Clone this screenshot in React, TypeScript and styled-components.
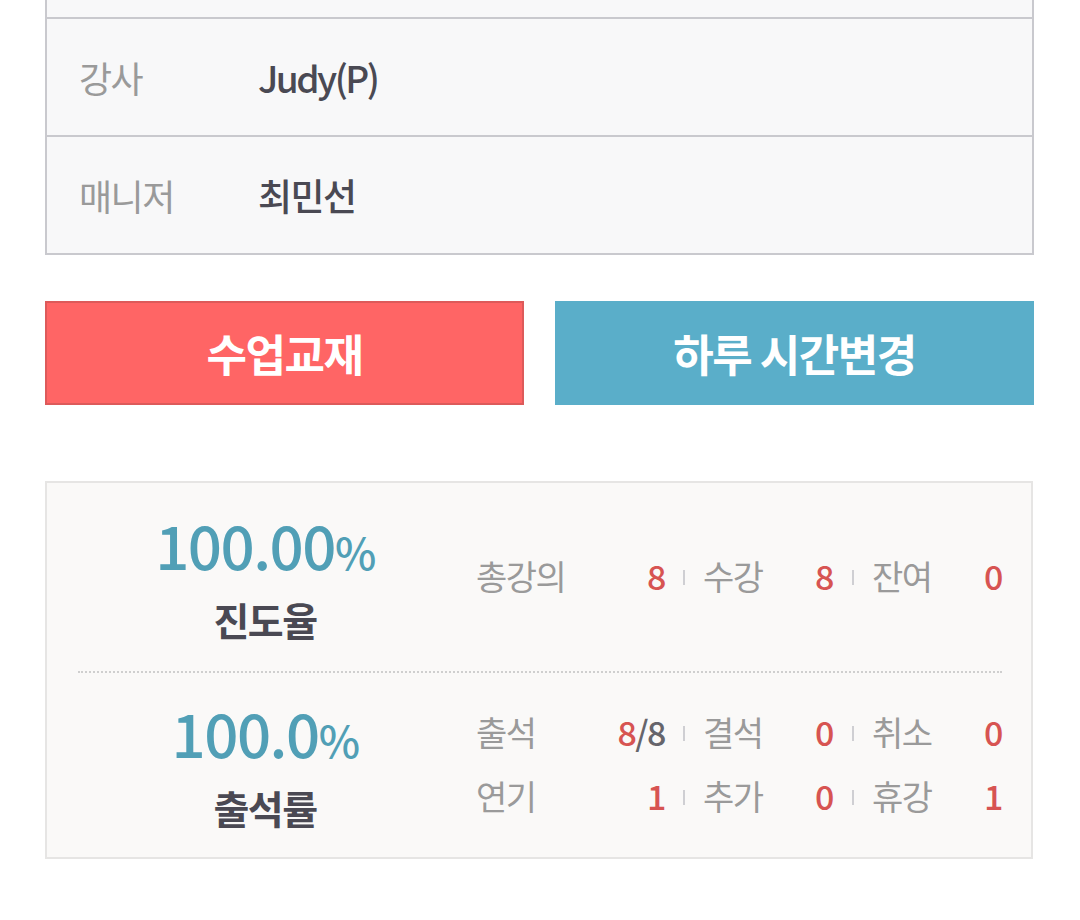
import React from "react";
import styled, { createGlobalStyle } from "styled-components";

const Global = createGlobalStyle`
  html, body { margin: 0; padding: 0; background: #ffffff; }
  body { font-family: "Noto Sans CJK KR", "Noto Sans", sans-serif; }
  * { box-sizing: border-box; }
`;

const Page = styled.div`
  width: 1080px;
  padding: 0 46px 40px 45px;
`;

const InfoTable = styled.div`
  border: 2px solid #c9c9ce;
  border-top: none;
  background: #f8f8f9;
`;

const InfoRow = styled.div<{ $cut?: boolean }>`
  display: flex;
  align-items: center;
  height: ${(p) => (p.$cut ? "17px" : "118px")};
  padding-left: 32px;
  & + & { border-top: 2px solid #c9c9ce; }
`;

const InfoLabel = styled.div`
  width: 179px;
  font-size: 36px;
  color: #9a9a9a;
  letter-spacing: -1.5px;
`;

const InfoValue = styled.div<{ $latin?: boolean }>`
  font-size: 37px;
  font-weight: 500;
  color: #4a4953;
  letter-spacing: ${(p) => (p.$latin ? "-2.5px" : "-1.5px")};
`;

const ButtonRow = styled.div`
  display: grid;
  grid-template-columns: 1fr 1fr;
  gap: 31px;
  margin-top: 46px;
`;

const ActionButton = styled.button<{ $variant: "red" | "blue" }>`
  height: 104px;
  border: 2px solid ${(p) => (p.$variant === "red" ? "#dd5a5a" : "#5aaec9")};
  background: ${(p) => (p.$variant === "red" ? "#ff6565" : "#5aaec9")};
  color: #ffffff;
  font-family: "Noto Sans CJK KR", sans-serif;
  font-size: 44px;
  font-weight: 700;
  letter-spacing: -1.5px;
  padding: 0;
`;

const StatsBox = styled.div`
  margin-top: 76px;
  width: 988px;
  border: 2px solid #e6e5e4;
  background: #faf9f8;
  padding: 0 29px 0 31px;
`;

const Section = styled.div<{ $h: number }>`
  display: grid;
  grid-template-columns: 374px 1fr;
  column-gap: 24px;
  align-items: center;
  height: ${(p) => p.$h}px;
  & + & { border-top: 2px dotted #cfcfcf; }
`;

const RateBlock = styled.div`
  display: flex;
  flex-direction: column;
  align-items: center;
`;

const RateNumber = styled.div`
  font-size: 60px;
  line-height: 62px;
  font-weight: 500;
  color: #519fb6;
  letter-spacing: -1.5px;
`;

const Pct = styled.span`
  font-size: 44px;
`;

const RateLabel = styled.div`
  margin-top: 14px;
  font-size: 39px;
  line-height: 46px;
  font-weight: 700;
  color: #4a4953;
  letter-spacing: -1.5px;
`;

const StatRows = styled.div`
  display: flex;
  flex-direction: column;
  gap: 14px;
`;

const StatRow = styled.div`
  display: grid;
  grid-template-columns: 189px 38px 130px 39px 130px;
  align-items: center;
  height: 50px;
`;

const StatCell = styled.div`
  display: flex;
  justify-content: space-between;
  align-items: center;
  font-size: 34px;
  letter-spacing: -1.5px;
  margin-top: -4px;
`;

const StatLabel = styled.span`
  color: #9a9a9a;
`;

const StatValue = styled.span`
  color: #d75452;
  font-weight: 500;
`;

const Slash = styled.span`
  color: #66656b;
`;

const Sep = styled.span`
  justify-self: center;
  width: 2px;
  height: 15px;
  background: #cfcfd3;
`;

type Stat = { label: string; value: React.ReactNode };

const Stats = ({ items }: { items: Stat[] }) => (
  <StatRow>
    {items.map((s, i) => (
      <React.Fragment key={s.label}>
        {i > 0 && <Sep />}
        <StatCell>
          <StatLabel>{s.label}</StatLabel>
          <StatValue>{s.value}</StatValue>
        </StatCell>
      </React.Fragment>
    ))}
  </StatRow>
);

export default function App() {
  return (
    <>
      <Global />
      <Page>
        <InfoTable>
          <InfoRow $cut />
          <InfoRow>
            <InfoLabel>강사</InfoLabel>
            <InfoValue $latin>Judy(P)</InfoValue>
          </InfoRow>
          <InfoRow>
            <InfoLabel>매니저</InfoLabel>
            <InfoValue>최민선</InfoValue>
          </InfoRow>
        </InfoTable>

        <ButtonRow>
          <ActionButton $variant="red">수업교재</ActionButton>
          <ActionButton $variant="blue">하루 시간변경</ActionButton>
        </ButtonRow>

        <StatsBox>
          <Section $h={188}>
            <RateBlock>
              <RateNumber>
                100.00<Pct>%</Pct>
              </RateNumber>
              <RateLabel>진도율</RateLabel>
            </RateBlock>
            <StatRows>
              <Stats
                items={[
                  { label: "총강의", value: "8" },
                  { label: "수강", value: "8" },
                  { label: "잔여", value: "0" },
                ]}
              />
            </StatRows>
          </Section>
          <Section $h={186}>
            <RateBlock>
              <RateNumber>
                100.0<Pct>%</Pct>
              </RateNumber>
              <RateLabel>출석률</RateLabel>
            </RateBlock>
            <StatRows>
              <Stats
                items={[
                  {
                    label: "출석",
                    value: (
                      <>
                        8<Slash>/8</Slash>
                      </>
                    ),
                  },
                  { label: "결석", value: "0" },
                  { label: "취소", value: "0" },
                ]}
              />
              <Stats
                items={[
                  { label: "연기", value: "1" },
                  { label: "추가", value: "0" },
                  { label: "휴강", value: "1" },
                ]}
              />
            </StatRows>
          </Section>
        </StatsBox>
      </Page>
    </>
  );
}
